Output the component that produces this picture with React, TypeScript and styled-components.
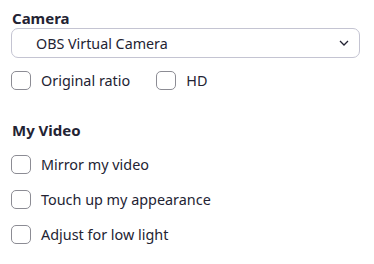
import React from 'react'
import styled, { createGlobalStyle } from 'styled-components'

const GlobalStyle = createGlobalStyle`
  html, body {
    margin: 0;
    padding: 0;
    background: #ffffff;
  }
  body {
    font-family: 'Noto Sans', 'Open Sans', sans-serif;
    color: #232333;
  }
`

interface checkProps {
  label: string
}

const Check = ({ label }: checkProps) => {
  return (
    <CheckLabel>
      <CheckBox type="checkbox" />
      <span>{label}</span>
    </CheckLabel>
  )
}

const App = () => {
  return (
    <>
      <GlobalStyle />
      <Panel>
        <Section>
          <Heading>Camera</Heading>
          <SelectBox>
            <span>OBS Virtual Camera</span>
            <svg width="10" height="6" viewBox="0 0 10 6">
              <path d="M1 1l4 4 4-4" fill="none" stroke="#232333" strokeWidth="1.3" />
            </svg>
          </SelectBox>
          <InlineRow>
            <Check label="Original ratio" />
            <Check label="HD" />
          </InlineRow>
        </Section>
        <Section>
          <Heading>My Video</Heading>
          <CheckList>
            <Check label="Mirror my video" />
            <Check label="Touch up my appearance" />
            <Check label="Adjust for low light" />
          </CheckList>
        </Section>
      </Panel>
    </>
  )
}

const Panel = styled.div`
  width: 374px;
  height: 264px;
  box-sizing: border-box;
  padding: 9px 14px 0 11px;
  display: flex;
  flex-direction: column;
  gap: 30px;
`

const Section = styled.div`
  display: flex;
  flex-direction: column;
`

const Heading = styled.div`
  font-size: 15px;
  font-weight: 700;
  line-height: 18px;
  padding-left: 1px;
  margin-bottom: 1px;
`

const SelectBox = styled.div`
  height: 30px;
  box-sizing: border-box;
  border: 1px solid #c4c4d2;
  border-radius: 7px;
  display: flex;
  align-items: center;
  justify-content: space-between;
  padding: 0 10px 0 24px;
  font-size: 14.3px;
  margin-bottom: 11px;
`

const InlineRow = styled.div`
  display: flex;
  gap: 26px;
`

const CheckList = styled.div`
  display: flex;
  flex-direction: column;
  gap: 13px;
  margin-top: 13px;
`

const CheckLabel = styled.label`
  display: flex;
  align-items: center;
  gap: 10px;
  height: 22px;
  font-size: 14.4px;
`

const CheckBox = styled.input`
  appearance: none;
  margin: 0;
  width: 20px;
  height: 19px;
  box-sizing: border-box;
  border: 1.5px solid #8c8c94;
  border-radius: 5px;
  background: #fff;
`

export default App
